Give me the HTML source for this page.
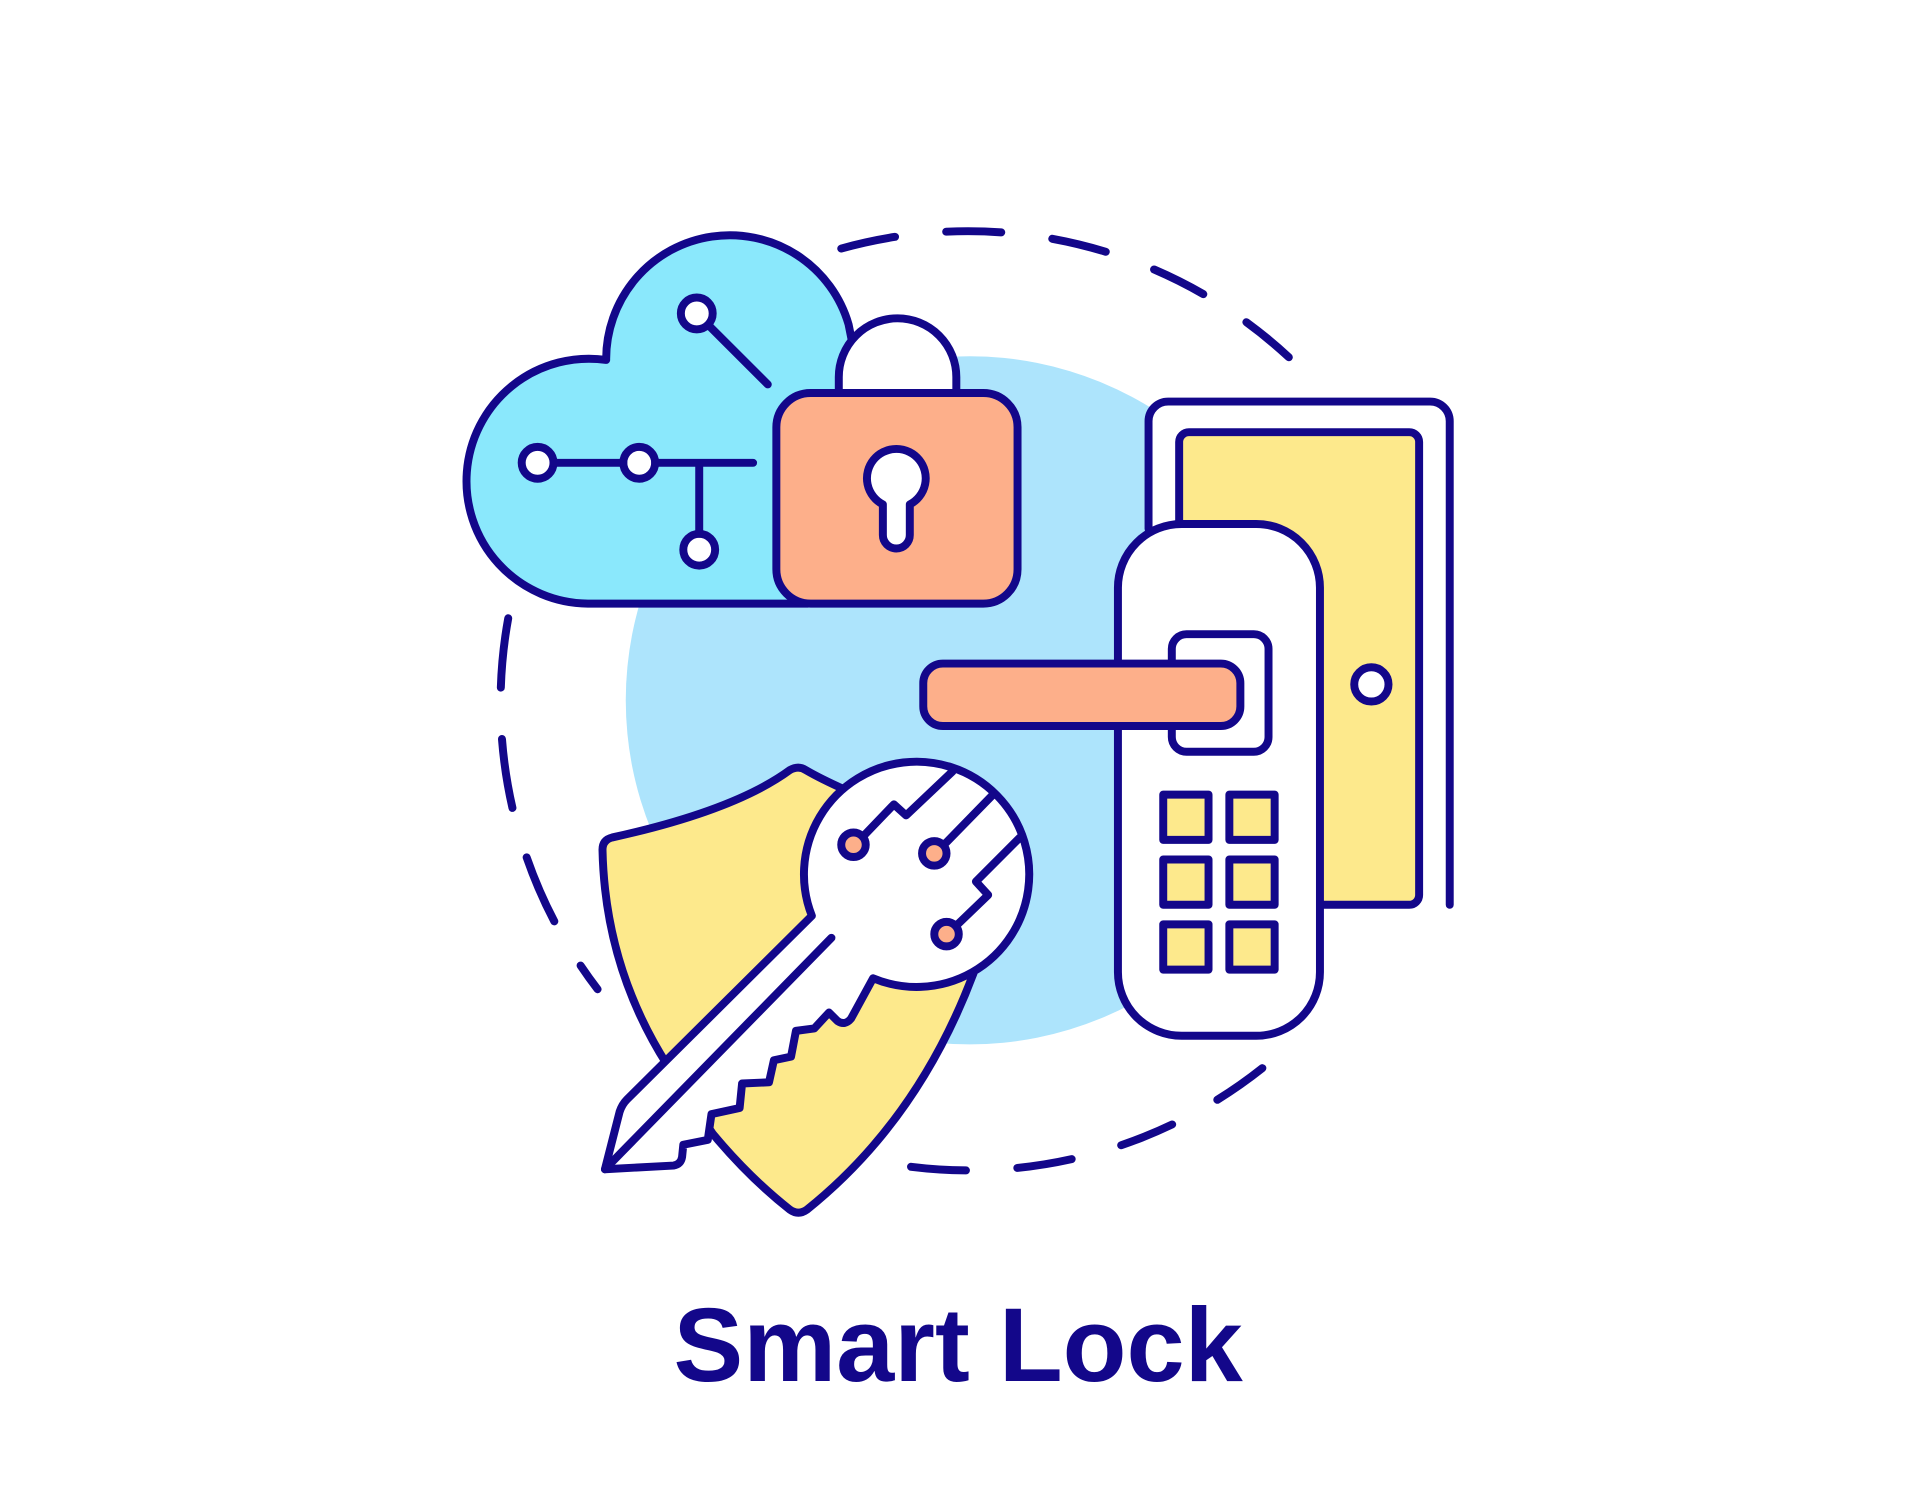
<!DOCTYPE html>
<html><head><meta charset="utf-8"><style>html,body{margin:0;padding:0;background:#fff}svg{display:block}</style></head>
<body>
<svg width="1920" height="1490" viewBox="0 0 1568 1217" xmlns="http://www.w3.org/2000/svg">
<g fill="none" stroke="#13078a" stroke-width="6.5" stroke-linecap="round" stroke-linejoin="round">
<circle cx="792" cy="572" r="281" fill="#ade4fc" stroke="none"/>
<path d="M687,203 A385,385 0 0 1 1056,295" stroke-dasharray="45 42"/>
<path d="M415,505 A385,385 0 0 0 488,808" stroke-dasharray="57 42"/>
<path d="M744,953 A385,385 0 0 0 1034,870" stroke-dasharray="45 42"/>
<!-- cloud -->
<path d="M480,493 A100,100 0 1 1 495,294 A101,101 0 0 1 693,265 L700,300 L700,470 L660,493 Z" fill="#8ae8fc"/>
<g fill="#fff">
<circle cx="569" cy="256" r="13"/><circle cx="439" cy="378" r="13"/><circle cx="522" cy="378" r="13"/><circle cx="571" cy="449" r="13"/>
</g>
<path d="M580,267 L627,314 M452,378 H509 M535,378 H615 M571,378 V436"/>
<!-- lock -->
<path d="M685,320 V308 A48,48 0 0 1 781,308 V320" fill="#fff"/>
<rect x="634" y="321" width="197" height="172" rx="28" fill="#fdaf8a"/>
<path d="M721,412 A24,24 0 1 1 743,412 V437 A11,11 0 0 1 721,437 Z" fill="#fff"/>
<!-- door -->
<path d="M938,432 V344 A16,16 0 0 1 954,328 H1168 A16,16 0 0 1 1184,344 V739" fill="#fff"/>
<rect x="963" y="353" width="196" height="386" rx="8" fill="#fde98c"/>
<circle cx="1120" cy="559" r="14" fill="#fff"/>
<rect x="913" y="428" width="165" height="418" rx="52" fill="#fff"/>
<rect x="957" y="518" width="79" height="96" rx="12" fill="#fff"/>
<rect x="754" y="542" width="259" height="51" rx="16" fill="#fdaf8a"/>
<g fill="#fde98c">
<rect x="950" y="649" width="37" height="37"/><rect x="1004" y="649" width="37" height="37"/>
<rect x="950" y="702" width="37" height="37"/><rect x="1004" y="702" width="37" height="37"/>
<rect x="950" y="755" width="37" height="37"/><rect x="1004" y="755" width="37" height="37"/>
</g>
<!-- shield -->
<path d="M645,629 Q600,662 500,684 Q492,686 492,694 Q494,790 545,870 L582,926 Q612,962 645,988 Q652,993 659,988 Q750,915 795,795 L690,645 Q670,636 658,629 Q652,625 645,629 Z" fill="#fde98c"/>
<!-- key -->
<path d="M663,748 L512,898 Q508,902 506,908 L494,955 L550,952 Q556,951 557,945 L558,935 L578,931 L581,910 L604,905 L606,885 L628,884 L632,866 L646,863 L650,842 L665,840 L677,827 L684,834 Q690,838 695,832 L713,799 A92,92 0 1 0 663,748 Z" fill="#fff"/>
<path d="M679,766 L494,955"/>
<path d="M705,683 L730,657 L740,666 L778,630 M771,690 L810,650 M781,756 L807,731 L797,720 L833,684"/>
<g fill="#fdaf8a">
<circle cx="697" cy="690" r="10"/><circle cx="763" cy="697" r="10"/><circle cx="773" cy="763" r="10"/>
</g>
</g>
<text x="550" y="1128" font-family="Liberation Sans, sans-serif" font-weight="bold" font-size="86" fill="#13078a" textLength="465" lengthAdjust="spacingAndGlyphs">Smart Lock</text>
</svg>
</body></html>
